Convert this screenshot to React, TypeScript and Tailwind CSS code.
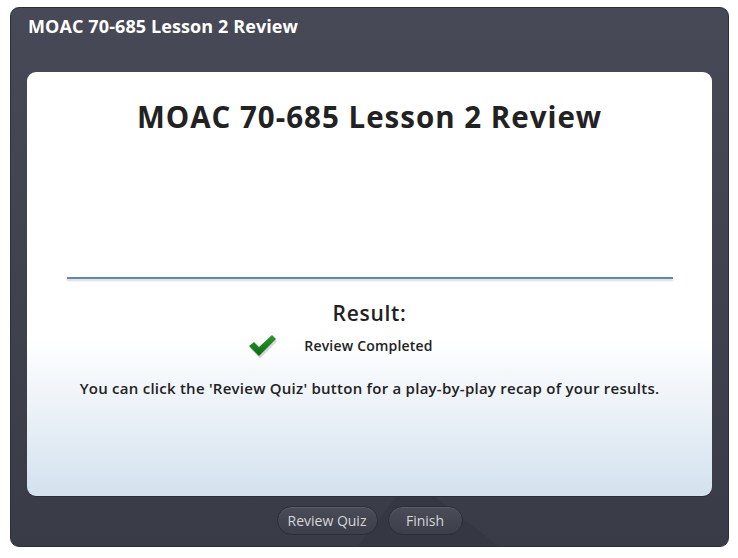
export default function App() {
  return (
    <div className="w-[738px] h-[558px] bg-white pt-[7px] pl-[10px] font-['Open_Sans',sans-serif]">
      <div className="w-[719px] h-[540px] rounded-[9px] border border-[#2e3039] bg-gradient-to-b from-[#474956] to-[#393b46] flex flex-col relative overflow-hidden">
        {/* subtle diagonal shading at the bottom */}
        <div className="absolute left-[400px] top-[470px] w-[600px] h-[200px] bg-[#2f313b]/40 rotate-[38deg] origin-top-left" />
        <div className="h-[64px] px-[17px] pt-[5px] text-white font-bold text-[18px] tracking-[0.1px] relative">
          MOAC 70-685 Lesson 2 Review
        </div>
        <div className="mx-[16px] h-[424px] rounded-[9px] bg-gradient-to-b from-white from-[63%] to-[#d3e1ee] flex flex-col items-center relative shadow-[0_1px_0_#2c2e36]">
          <h1 className="mt-[23px] text-[29.5px] font-bold text-[#222] tracking-[1px]">MOAC 70-685 Lesson 2 Review</h1>
          <div className="mt-[138px] w-[606px] h-[2px] bg-[#5d86bf] shadow-[0_2px_2px_#d8d8d8]" />
          <div className="mt-[19px] text-[21px] font-semibold text-[#222] tracking-[0.7px]">Result:</div>
          <div className="mt-[3px] flex items-center gap-[26px] -ml-[60px]">
            <svg width="32" height="26" viewBox="0 0 32 26">
              <defs>
                <linearGradient id="ck" x1="0" y1="0" x2="0" y2="1">
                  <stop offset="0" stopColor="#2c9a2c" />
                  <stop offset="1" stopColor="#0a6b10" />
                </linearGradient>
              </defs>
              <path d="M3 14 L8 10 L13 15 L26 3 L30 7 L13 24 Z" fill="#000" opacity="0.15" transform="translate(1 1.5)" />
              <path d="M3 13 L8 9 L13 14 L26 2 L30 6 L13 23 Z" fill="url(#ck)" />
            </svg>
            <span className="text-[14px] font-semibold text-[#222] tracking-[0.2px]">Review Completed</span>
          </div>
          <p className="mt-[18px] text-[15px] font-semibold text-[#222] tracking-[0.25px]">
            You can click the 'Review Quiz' button for a play-by-play recap of your results.
          </p>
        </div>
        <div className="flex justify-center gap-[10px] mt-[10px] relative">
          <button className="h-[29px] w-[101px] rounded-full border border-[#2c2e36] bg-gradient-to-b from-[#4a4c58] to-[#3c3e49] text-[#d4d5da] text-[14px] shadow-[inset_0_1px_0_#5a5c68]">
            Review Quiz
          </button>
          <button className="h-[29px] w-[75px] rounded-full border border-[#2c2e36] bg-gradient-to-b from-[#4a4c58] to-[#3c3e49] text-[#d4d5da] text-[14px] shadow-[inset_0_1px_0_#5a5c68]">
            Finish
          </button>
        </div>
      </div>
    </div>
  );
}
